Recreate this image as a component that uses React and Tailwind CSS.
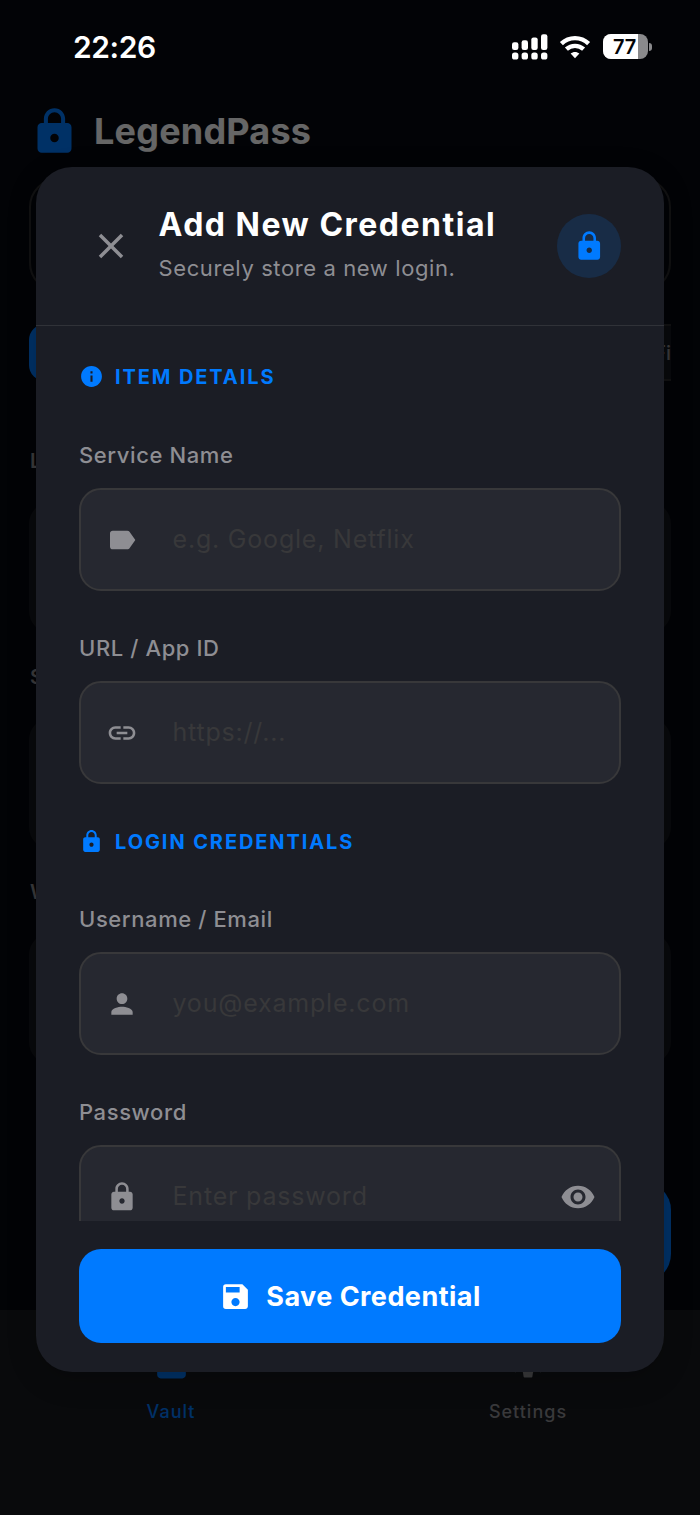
import React from 'react';
import {
  MdClose,
  MdInfo,
  MdLabel,
  MdLink,
  MdLock,
  MdPerson,
  MdSave,
  MdSettings,
  MdVisibility,
} from 'react-icons/md';

const StatusBar = () => (
  <div className="absolute inset-x-0 top-0 z-20 flex h-[94px] items-center justify-between pl-[73px] pr-[48px] text-white">
    <span className="text-[30px] font-semibold leading-none tracking-[-0.4px]">22:26</span>
    <div className="flex items-center pb-[1px]">
      <svg width="36" height="26" viewBox="0 0 36 26" fill="currentColor">
        <rect x="0" y="8.3" width="6.4" height="7.6" rx="2.2" />
        <rect x="9.6" y="6.3" width="6.4" height="9.6" rx="2.2" />
        <rect x="19.3" y="3.4" width="6.4" height="12.5" rx="2.2" />
        <rect x="29" y="0.3" width="6.4" height="15.6" rx="2.2" />
        <rect x="0" y="18.5" width="6.4" height="7" rx="2.6" />
        <rect x="9.6" y="18.5" width="6.4" height="7" rx="2.6" />
        <rect x="19.3" y="18.5" width="6.4" height="7" rx="2.6" />
        <rect x="29" y="18.5" width="6.4" height="7" rx="2.6" />
      </svg>
      <svg className="ml-[11px]" width="32" height="24" viewBox="0 0 32 24" fill="none">
        <path d="M2.4 8.6C10 1.3 22 1.3 29.6 8.6" stroke="currentColor" strokeWidth="4.4" />
        <path d="M7.4 14.2c4.9-4.5 12.3-4.5 17.2 0" stroke="currentColor" strokeWidth="4.4" />
        <path d="M11.6 18.6c2.5-2.2 6.3-2.2 8.8 0L16 23.2z" fill="currentColor" />
      </svg>
      <div className="ml-[12px] flex items-center">
        <div className="relative flex h-[25px] w-[45px] items-center overflow-hidden rounded-[8px] bg-[#8a8a8c]">
          <div className="h-full w-[35px] bg-white" />
          <span className="absolute left-[10px] text-[20px] font-semibold leading-none tracking-[-0.1px] text-[#030407]">
            77
          </span>
        </div>
        <div className="ml-[1px] h-[8px] w-[3px] rounded-r-full bg-[#8a8a8c]" />
      </div>
    </div>
  </div>
);

const VaultGroup = ({ initial }) => (
  <div className="h-[215.5px]">
    <p className="h-[53px] pl-[1px] text-[20px] font-semibold leading-[24px] text-[#8e8e93]">{initial}</p>
    <div className="h-[131px] rounded-[22px] bg-[#16181e]" />
  </div>
);

const VaultScreen = () => (
  <div className="flex h-full flex-col bg-[#07090f]">
    <div className="flex-1 px-[29px] pt-[94px]">
      <div className="-ml-[0.5px] flex h-[74px] items-center">
        <MdLock className="size-[51px] text-[#007aff]" />
        <h1 className="ml-[14.5px] text-[36px] font-bold leading-none tracking-[0.2px] text-white">LegendPass</h1>
      </div>
      <div className="mt-[10px] h-[114px] rounded-[29px] border-2 border-[#2c2c2e]" />
      <div className="mt-[32px] flex h-[57px] justify-between">
        <div className="w-[90px] rounded-[16px] bg-[#007aff]" />
        <div className="flex w-[60px] items-center justify-end border-y-2 border-[#2c2c2e] bg-[#16181e] text-[20px] font-medium text-[#8e8e93]">
          Fi
        </div>
      </div>
      <div className="pt-[68px]">
        <VaultGroup initial="L" />
        <VaultGroup initial="S" />
        <VaultGroup initial="W" />
      </div>
      <div className="mt-[86px] ml-auto h-[100px] w-[100px] rounded-[28px] bg-[#007aff]" />
    </div>
    <nav className="flex h-[205px] bg-[#17191f] pt-[28px] text-[18px] font-medium tracking-[1px]">
      <div className="flex w-[342px] flex-col items-center pt-[1px] text-[#007aff]">
        <MdLock className="size-[43px]" />
        <span className="mt-[16px] leading-[28px]">Vault</span>
      </div>
      <div className="ml-[14px] flex w-[344px] flex-col items-center text-[#8e8e93]">
        <MdSettings className="size-[44px]" />
        <span className="mt-[16px] leading-[28px]">Settings</span>
      </div>
    </nav>
  </div>
);

const SectionTitle = ({ icon: Icon, children }) => (
  <div className="flex h-[26px] items-center text-[#007aff]">
    <Icon className="size-[25px]" />
    <h3 className="ml-[11px] pt-[1px] text-[20px] font-bold leading-none tracking-[1.9px]">{children}</h3>
  </div>
);

const Field = ({ label, icon: Icon, placeholder, trailing }) => (
  <div>
    <p className="h-[46px] text-[22px] font-medium leading-[27px] tracking-[0.6px] text-[#8e8e93]">{label}</p>
    <div className="flex h-[103px] items-center rounded-[22px] border-2 border-[#38383a] bg-[#262830] pl-[25px] pr-[23px] text-[#8e8e93]">
      <Icon className="size-[32px] shrink-0" />
      <input
        placeholder={placeholder}
        className="ml-[34.5px] min-w-0 flex-1 bg-transparent text-[25px] tracking-[0.8px] outline-none placeholder:text-[#38383a]"
      />
      {trailing}
    </div>
  </div>
);

const CredentialModal = () => (
  <div className="flex h-[1205px] w-[628px] flex-col overflow-hidden rounded-[36px] bg-[#1b1d25] shadow-[0_8px_30px_rgba(0,0,0,0.2)]">
    <div className="flex h-[159px] shrink-0 border-b border-[#303238] pl-[54px] pr-[43px]">
      <MdClose className="mt-[58px] size-[42px] text-[#8e8e93]" />
      <div className="ml-[26.5px] flex-1 pt-[38px]">
        <h2 className="text-[32px] font-bold leading-[40px] tracking-[1.5px] text-white">Add New Credential</h2>
        <p className="mt-[9px] text-[22px] leading-[28px] tracking-[0.6px] text-[#8e8e93]">
          Securely store a new login.
        </p>
      </div>
      <div className="mt-[46.5px] flex size-[64.5px] items-center justify-center rounded-full bg-[#182c46]">
        <MdLock className="size-[32.5px] text-[#007aff]" />
      </div>
    </div>

    <div className="h-[895px] shrink-0 overflow-hidden px-[43px] pt-[37px]">
      <SectionTitle icon={MdInfo}>ITEM DETAILS</SectionTitle>
      <div className="mt-[53px] flex flex-col gap-[44px]">
        <Field label="Service Name" icon={MdLabel} placeholder="e.g. Google, Netflix" />
        <Field label="URL / App ID" icon={MdLink} placeholder="https://..." />
      </div>
      <div className="mt-[44px]">
        <SectionTitle icon={MdLock}>LOGIN CREDENTIALS</SectionTitle>
      </div>
      <div className="mt-[52px] flex flex-col gap-[44px]">
        <Field label="Username / Email" icon={MdPerson} placeholder="you@example.com" />
        <Field
          label="Password"
          icon={MdLock}
          placeholder="Enter password"
          trailing={<MdVisibility className="size-[36px] shrink-0" />}
        />
      </div>
    </div>

    <div className="px-[43px] pt-[28px]">
      <button className="flex h-[94px] w-full items-center justify-center rounded-[22px] bg-[#007aff] text-white">
        <MdSave className="size-[33px]" />
        <span className="ml-[14px] text-[27px] font-bold leading-none tracking-[0.45px]">Save Credential</span>
      </button>
    </div>
  </div>
);

export default function App() {
  return (
    <div className="relative h-[1515px] w-[700px] overflow-hidden bg-black font-['Inter',sans-serif]">
      <VaultScreen />
      <StatusBar />
      <div className="absolute inset-0 z-10 flex justify-center bg-black/60 pt-[167px]">
        <CredentialModal />
      </div>
    </div>
  );
}
